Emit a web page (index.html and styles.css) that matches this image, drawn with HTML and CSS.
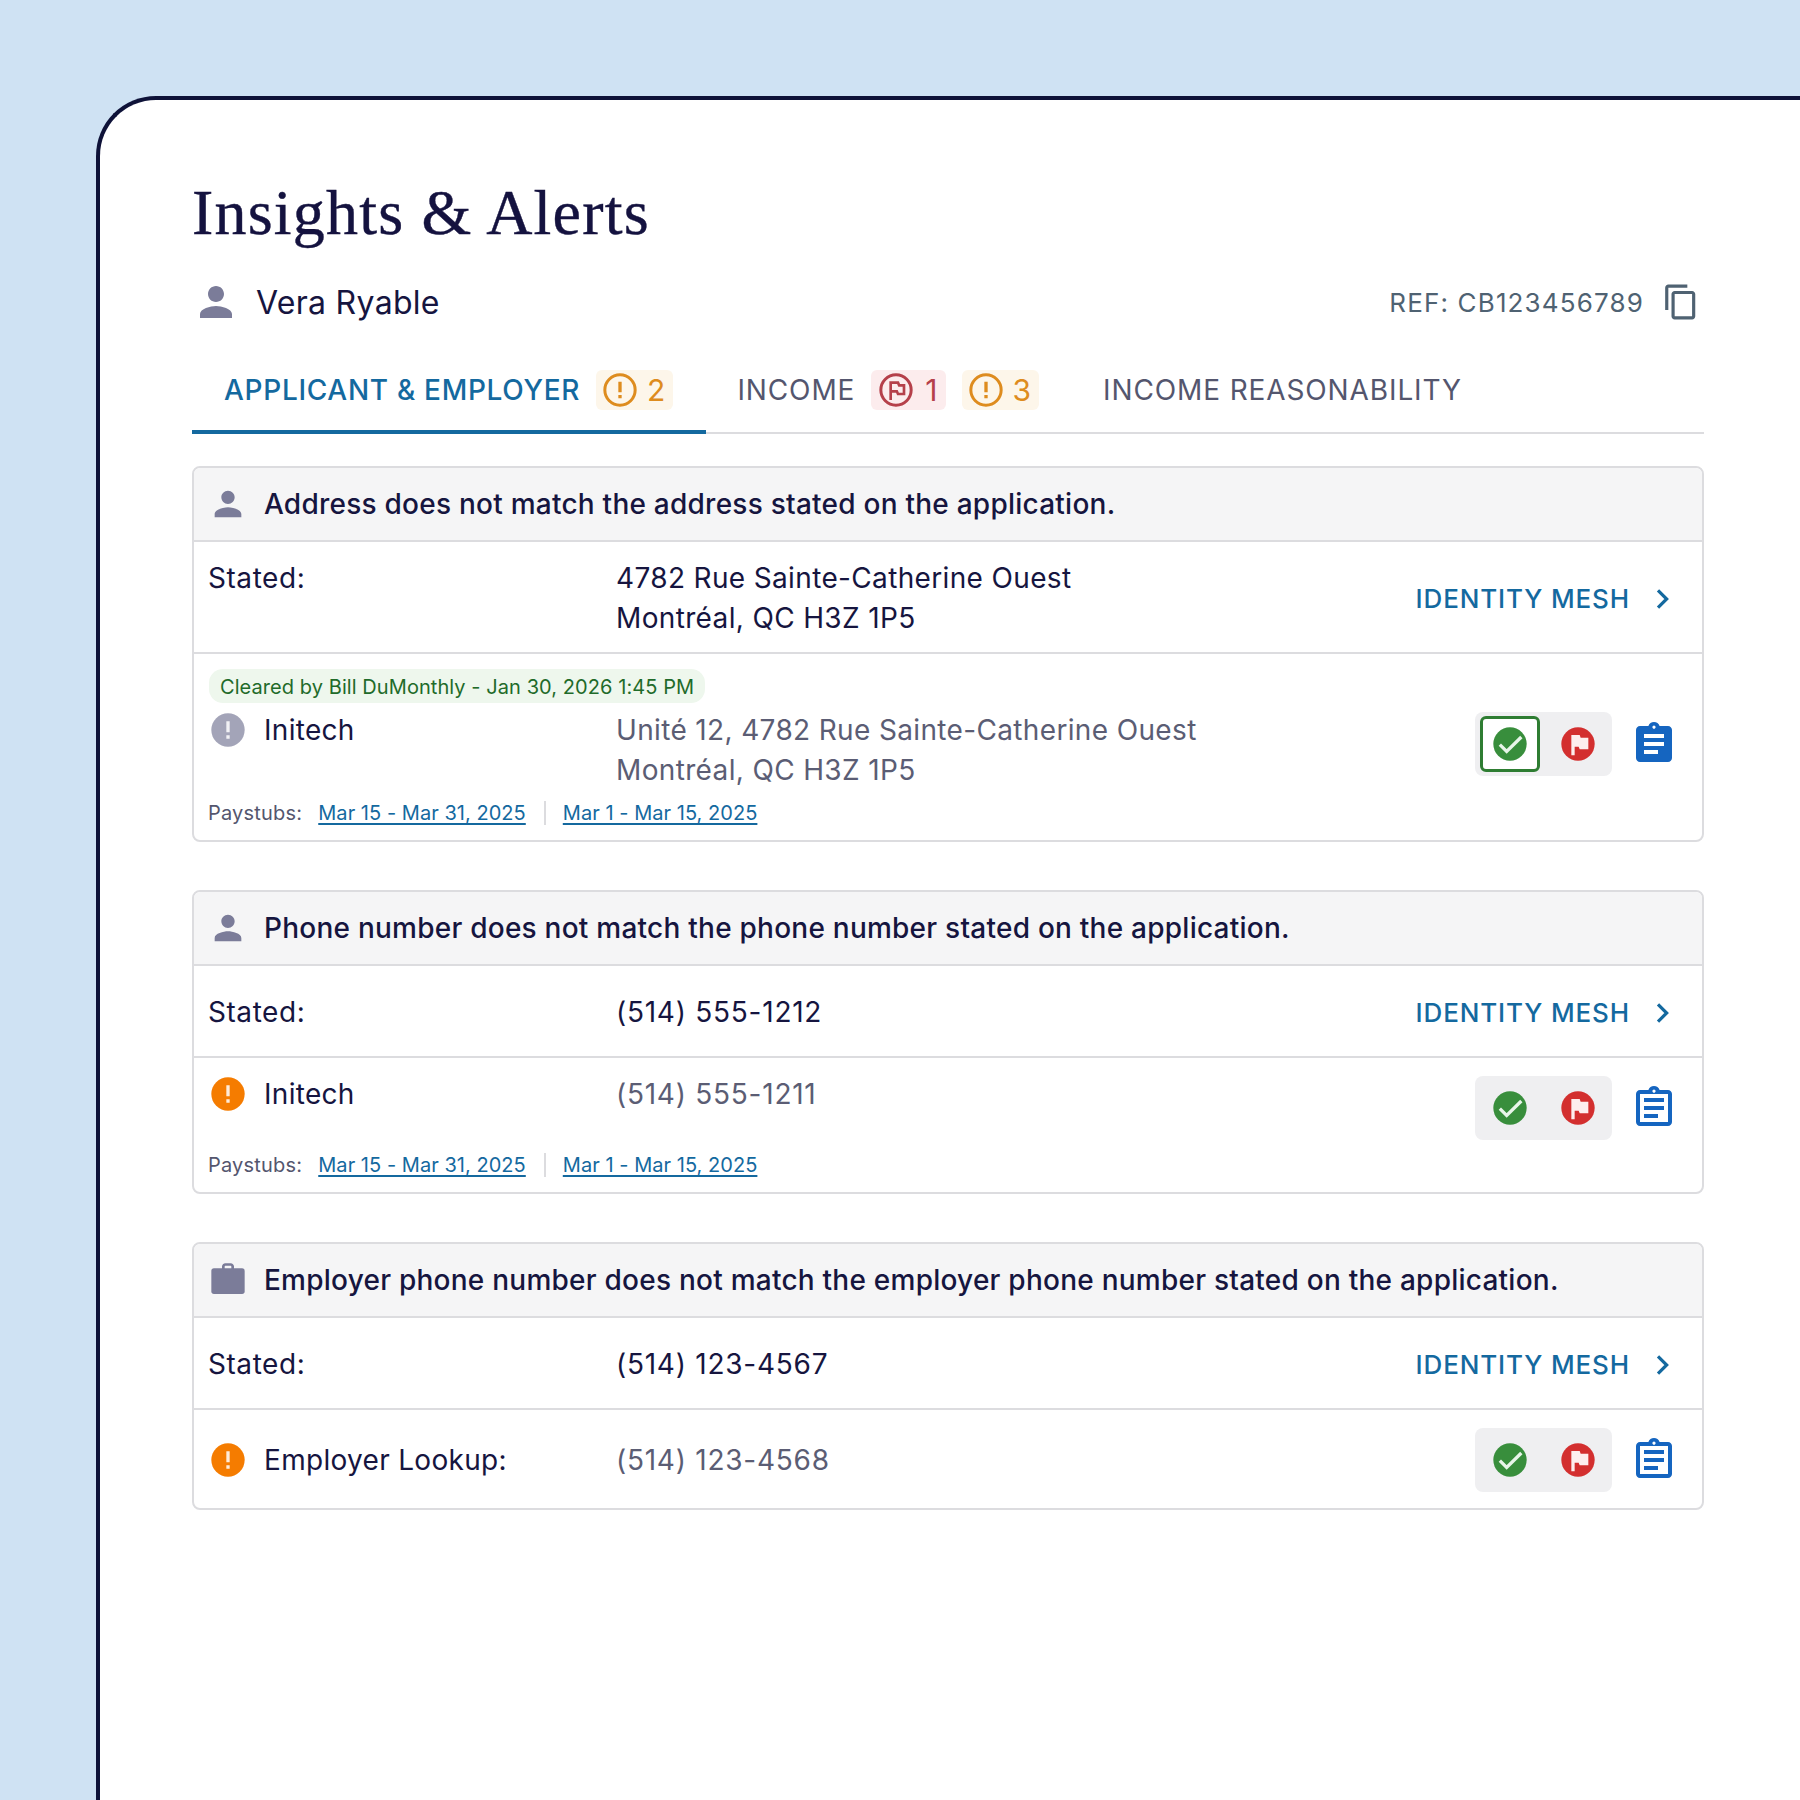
FILE: index.html
```html
<!DOCTYPE html>
<html lang="en">
<head>
<meta charset="utf-8">
<title>Insights &amp; Alerts</title>
<link rel="stylesheet" href="styles.css">
</head>
<body>
<svg class="defs" width="0" height="0" aria-hidden="true">
  <defs>
    <symbol id="person" viewBox="0 0 24 24"><path d="M12 12c2.21 0 4-1.79 4-4s-1.79-4-4-4-4 1.79-4 4 1.79 4 4 4zm0 2c-2.67 0-8 1.34-8 4v2h16v-2c0-2.66-5.33-4-8-4z"/></symbol>
    <symbol id="work" viewBox="0 0 24 24"><path d="M8.4 3.9C8.4 2.8 9.3 1.9 10.4 1.9h3.2c1.1 0 2 .9 2 1.9V5.4h-1.6V3.9c0-.2-.2-.4-.4-.4h-3.2c-.2 0-.4.2-.4.4v1.5H8.4z"/><rect x="2" y="5" width="20" height="15.4" rx="1.6"/></symbol>
    <symbol id="copy" viewBox="0 0 24 24"><path d="M16 1H4c-1.1 0-2 .9-2 2v14h2V3h12V1zm3 4H8c-1.1 0-2 .9-2 2v14c0 1.1.9 2 2 2h11c1.1 0 2-.9 2-2V7c0-1.1-.9-2-2-2zm0 16H8V7h11v14z"/></symbol>
    <symbol id="warn-outline" viewBox="0 0 24 24"><circle cx="12" cy="12" r="9.1" fill="none" stroke="currentColor" stroke-width="1.8"/><path fill="currentColor" d="M11 7h2v6.4h-2zM11 15h2v2h-2z"/></symbol>
    <symbol id="flag-outline" viewBox="0 0 24 24"><circle cx="12" cy="12" r="9.1" fill="none" stroke="currentColor" stroke-width="1.8"/><path fill="none" stroke="currentColor" stroke-width="1.6" d="M8.8 18V7.6h4.4l.7 1.6h2.9v5.2h-3.6l-.7-1.6H8.8"/></symbol>
    <symbol id="warn-fill" viewBox="0 0 24 24"><circle cx="12" cy="12" r="10"/><path fill="#fff" opacity=".85" d="M11 6.8h2v6.6h-2zM11 15.2h2v2h-2z"/></symbol>
    <symbol id="check-fill" viewBox="0 0 24 24"><circle cx="12" cy="12" r="10" fill="#388e3c"/><path fill="none" stroke="#e8f5e9" stroke-width="2" d="M5.9 12.4l4.1 4 8.8-8.6"/></symbol>
    <symbol id="flag-fill" viewBox="0 0 24 24"><circle cx="12" cy="12" r="10" fill="#d32f2f"/><path fill="#fdeeee" d="M8 6.6h5l.6 1.6h4.6v7h-5.2l-.6-1.6H10v5.2H8z"/></symbol>
    <symbol id="clip-fill" viewBox="0 0 24 24"><path fill="#1565c0" d="M19 3h-4.2C14.4 1.8 13.3 1 12 1s-2.4.8-2.8 2H5c-1.1 0-2 .9-2 2v14c0 1.1.9 2 2 2h14c1.1 0 2-.9 2-2V5c0-1.1-.9-2-2-2z"/><path fill="#fff" d="M12 2.8c.4 0 .8.4.8.8s-.4.8-.8.8-.8-.4-.8-.8.4-.8.8-.8zM7 7h10v2H7zM7 11h10v2H7zM7 15h7v2H7z"/></symbol>
    <symbol id="clip-outline" viewBox="0 0 24 24"><path fill="#1565c0" d="M19 3h-4.2C14.4 1.8 13.3 1 12 1s-2.4.8-2.8 2H5c-1.1 0-2 .9-2 2v14c0 1.1.9 2 2 2h14c1.1 0 2-.9 2-2V5c0-1.1-.9-2-2-2zm-7-.2c.4 0 .8.4.8.8s-.4.8-.8.8-.8-.4-.8-.8.4-.8.8-.8zM19 19H5V5h14v14zM7 7h10v2H7zM7 11h10v2H7zM7 15h7v2H7z"/></symbol>
  </defs>
</svg>

<main class="frame">
  <h1 class="title">Insights &amp; Alerts</h1>

  <div class="applicant">
    <div class="applicant-name">
      <svg class="icon-48 icon-grey"><use href="#person"/></svg>
      <span>Vera Ryable</span>
    </div>
    <div class="ref">
      <span>REF: CB123456789</span>
      <svg class="icon-38 icon-slate"><use href="#copy"/></svg>
    </div>
  </div>

  <nav class="tabs">
    <div class="tab tab-active">
      <span>APPLICANT &amp; EMPLOYER</span>
      <span class="badge badge-warn"><svg class="icon-40"><use href="#warn-outline"/></svg>2</span>
    </div>
    <div class="tab">
      <span>INCOME</span>
      <span class="badge badge-flag"><svg class="icon-40"><use href="#flag-outline"/></svg>1</span>
      <span class="badge badge-warn"><svg class="icon-40"><use href="#warn-outline"/></svg>3</span>
    </div>
    <div class="tab"><span>INCOME REASONABILITY</span></div>
  </nav>

  <section class="card">
    <header class="card-head">
      <svg class="icon-40 icon-grey"><use href="#person"/></svg>
      <span>Address does not match the address stated on the application.</span>
    </header>
    <div class="stated stated-tall">
      <div class="stated-label">Stated:</div>
      <div class="stated-value">4782 Rue Sainte-Catherine Ouest<br>Montréal, QC H3Z 1P5</div>
      <a class="mesh">IDENTITY MESH <svg class="chevron" viewBox="0 0 24 24"><path d="M9 5.5l6.5 6.5L9 18.5"/></svg></a>
    </div>
    <div class="source source-cleared">
      <div class="cleared">Cleared by Bill DuMonthly - Jan 30, 2026 1:45 PM</div>
      <div class="source-main source-main-tall">
        <div class="source-name">
          <svg class="icon-40 icon-muted"><use href="#warn-fill"/></svg>
          <span>Initech</span>
        </div>
        <div class="source-value">Unité 12, 4782 Rue Sainte-Catherine Ouest<br>Montréal, QC H3Z 1P5</div>
        <div class="actions">
          <div class="toggle">
            <span class="toggle-btn toggle-btn-on"><svg class="icon-40"><use href="#check-fill"/></svg></span>
            <span class="toggle-btn"><svg class="icon-40"><use href="#flag-fill"/></svg></span>
          </div>
          <svg class="icon-48"><use href="#clip-fill"/></svg>
        </div>
      </div>
      <div class="paystubs">
        <span class="paystubs-label">Paystubs:</span>
        <a class="paystub-link">Mar 15 - Mar 31, 2025</a>
        <span class="paystubs-sep"></span>
        <a class="paystub-link">Mar 1 - Mar 15, 2025</a>
      </div>
    </div>
  </section>

  <section class="card">
    <header class="card-head">
      <svg class="icon-40 icon-grey"><use href="#person"/></svg>
      <span>Phone number does not match the phone number stated on the application.</span>
    </header>
    <div class="stated">
      <div class="stated-label">Stated:</div>
      <div class="stated-value phone">(514) 555-1212</div>
      <a class="mesh">IDENTITY MESH <svg class="chevron" viewBox="0 0 24 24"><path d="M9 5.5l6.5 6.5L9 18.5"/></svg></a>
    </div>
    <div class="source">
      <div class="source-main">
        <div class="source-name">
          <svg class="icon-40 icon-orange"><use href="#warn-fill"/></svg>
          <span>Initech</span>
        </div>
        <div class="source-value phone">(514) 555-1211</div>
        <div class="actions">
          <div class="toggle">
            <span class="toggle-btn"><svg class="icon-40"><use href="#check-fill"/></svg></span>
            <span class="toggle-btn"><svg class="icon-40"><use href="#flag-fill"/></svg></span>
          </div>
          <svg class="icon-48"><use href="#clip-outline"/></svg>
        </div>
      </div>
      <div class="paystubs">
        <span class="paystubs-label">Paystubs:</span>
        <a class="paystub-link">Mar 15 - Mar 31, 2025</a>
        <span class="paystubs-sep"></span>
        <a class="paystub-link">Mar 1 - Mar 15, 2025</a>
      </div>
    </div>
  </section>

  <section class="card">
    <header class="card-head">
      <svg class="icon-40 icon-grey"><use href="#work"/></svg>
      <span>Employer phone number does not match the employer phone number stated on the application.</span>
    </header>
    <div class="stated">
      <div class="stated-label">Stated:</div>
      <div class="stated-value phone">(514) 123-4567</div>
      <a class="mesh">IDENTITY MESH <svg class="chevron" viewBox="0 0 24 24"><path d="M9 5.5l6.5 6.5L9 18.5"/></svg></a>
    </div>
    <div class="source source-single">
      <div class="source-main source-main-center">
        <div class="source-name">
          <svg class="icon-40 icon-orange"><use href="#warn-fill"/></svg>
          <span>Employer Lookup:</span>
        </div>
        <div class="source-value phone">(514) 123-4568</div>
        <div class="actions">
          <div class="toggle">
            <span class="toggle-btn"><svg class="icon-40"><use href="#check-fill"/></svg></span>
            <span class="toggle-btn"><svg class="icon-40"><use href="#flag-fill"/></svg></span>
          </div>
          <svg class="icon-48"><use href="#clip-outline"/></svg>
        </div>
      </div>
    </div>
  </section>
</main>
</body>
</html>
```
FILE: styles.css
```css
* { box-sizing: border-box; }

html, body { height: 100%; }

body {
  margin: 0;
  height: 1800px;
  overflow: hidden;
  background: #cfe2f3;
  font-family: Inter, "Liberation Sans", sans-serif;
  color: #16153f;
}

.defs { position: absolute; }

.frame {
  height: 1704px;
  margin: 96px 0 0 96px;
  padding: 80px 96px 0 92px;
  background: #fff;
  border-top: 4px solid #0e1238;
  border-left: 4px solid #0e1238;
  border-top-left-radius: 60px;
}

svg { flex: none; display: block; }
.icon-48 { width: 48px; height: 48px; }
.icon-40 { width: 40px; height: 40px; }
.icon-38 { width: 38px; height: 38px; }
.icon-grey { fill: #7b7c99; }
.icon-slate { fill: #4f6272; }
.icon-muted { fill: #a3a4b8; }
.icon-orange { fill: #f57c00; }

.title {
  margin: 0;
  height: 66px;
  font-family: "Liberation Serif", serif;
  font-weight: 400;
  font-size: 64px;
  line-height: 66px;
  letter-spacing: 1.2px;
  -webkit-text-stroke: 0.4px #14123f;
  color: #14123f;
}

.applicant {
  display: flex;
  align-items: center;
  justify-content: space-between;
  margin-top: 32px;
  height: 48px;
  padding-right: 4px;
}

.applicant-name {
  display: flex;
  align-items: center;
  gap: 16px;
  font-size: 32px;
  letter-spacing: 0.3px;
}

.ref {
  display: flex;
  align-items: center;
  gap: 18px;
  font-size: 26px;
  letter-spacing: 1.15px;
  color: #4f6272;
}

.tabs {
  display: flex;
  margin-top: 26px;
  height: 82px;
  border-bottom: 2px solid #dcdcdf;
}

.tab {
  display: flex;
  align-items: center;
  gap: 16px;
  height: 82px;
  padding: 0 32px 6px;
  font-size: 28px;
  font-weight: 400;
  letter-spacing: 0.88px;
  color: #54566e;
}

.tab-active {
  color: #14699f;
  font-weight: 500;
  letter-spacing: 0.7px;
  border-bottom: 4px solid #14699f;
  padding-right: 33px;
  padding-bottom: 2px;
}

.tab-active + .tab { padding-left: 31px; }

.badge {
  display: flex;
  align-items: center;
  gap: 7px;
  height: 40px;
  padding: 0 8px 0 4px;
  border-radius: 6px;
  font-size: 30px;
  font-weight: 400;
  letter-spacing: 0;
}

.badge-warn { color: #de8c1e; background: #fdf6ea; }

.badge-flag {
  gap: 9px;
  padding: 0 8px 0 5px;
  color: #b5404a;
  background: #fceced;
}

.card {
  margin-bottom: 48px;
  border: 2px solid #dcdcdf;
  border-radius: 8px;
  overflow: hidden;
}

.tabs + .card { margin-top: 32px; }

.card-head {
  display: flex;
  align-items: center;
  gap: 16px;
  height: 72px;
  padding-left: 14px;
  background: #f5f5f6;
  font-size: 28px;
  font-weight: 500;
  letter-spacing: 0.24px;
}

.stated {
  display: grid;
  grid-template-columns: 408px 1fr auto;
  align-items: center;
  height: 94px;
  padding: 2px 0 0 14px;
  border-top: 2px solid #dcdcdf;
  border-bottom: 2px solid #dcdcdf;
  font-size: 28px;
  line-height: 40px;
  letter-spacing: 0.35px;
}

.stated-tall {
  height: auto;
  padding-top: 16px;
  padding-bottom: 14px;
}

.stated-tall .stated-label { align-self: start; }

.stated-label { letter-spacing: 0.55px; }

.phone { letter-spacing: 0.75px; }

.mesh {
  display: flex;
  align-items: center;
  gap: 16px;
  margin-top: 1px;
  padding-right: 24px;
  font-size: 26px;
  font-weight: 500;
  letter-spacing: 0.86px;
  color: #14699f;
}

.chevron {
  width: 32px;
  height: 32px;
  fill: none;
  stroke: #14699f;
  stroke-width: 2.4;
}

.source { padding: 16px 0 10px 14px; }
.source-cleared { padding-top: 15px; }
.source-single { padding: 18px 0 16px 14px; }

.cleared {
  display: inline-block;
  height: 34px;
  margin: 0 0 7px 1px;
  padding: 0 11px;
  border-radius: 14px;
  background: #eef7ed;
  color: #1f6b2a;
  font-size: 20px;
  line-height: 36px;
  letter-spacing: 0.07px;
}

.source-main {
  display: grid;
  grid-template-columns: 408px 1fr auto;
  align-items: start;
  font-size: 28px;
  line-height: 40px;
  letter-spacing: 0.35px;
}

.source-main-center { align-items: center; }

.source-name {
  display: flex;
  align-items: center;
  gap: 16px;
  letter-spacing: 0.3px;
}

.source-value { color: #5b5d74; }

.actions {
  display: flex;
  align-items: center;
  gap: 18px;
  margin: 2px 24px 0 0;
}

.source-main-center .actions { margin-top: 0; }

.toggle {
  display: flex;
  justify-content: center;
  align-items: center;
  width: 137px;
  height: 64px;
  background: #efeff1;
  border-radius: 8px;
}

.toggle-btn {
  display: flex;
  align-items: center;
  justify-content: center;
  width: 68px;
  height: 56px;
  border: 3px solid transparent;
  border-radius: 6px;
}

.toggle-btn-on {
  background: #fff;
  border-color: #2e7d32;
  width: 60px;
  margin: 0 4px;
}

.paystubs {
  display: flex;
  align-items: center;
  height: 34px;
  margin-top: 8px;
  font-size: 20px;
  letter-spacing: 0.2px;
}

.source-cleared .paystubs { margin-top: 6px; }

.paystubs-label { color: #54566e; margin-right: 16px; }

.paystub-link {
  color: #14699f;
  letter-spacing: 0.04px;
  text-decoration: underline;
  text-decoration-skip-ink: none;
  text-underline-offset: 3px;
}

.paystubs-sep {
  width: 2px;
  height: 24px;
  margin: 0 17px 0 18px;
  background: #dcdcdf;
}
```
